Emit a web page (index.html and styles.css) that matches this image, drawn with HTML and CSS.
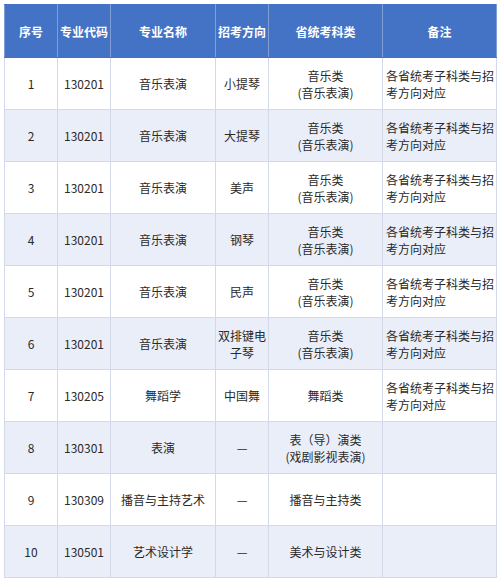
FILE: index.html
```html
<!DOCTYPE html>
<html lang="zh">
<head>
<meta charset="utf-8">
<link rel="stylesheet" href="styles.css">
</head>
<body>
<table class="majors">
  <colgroup>
    <col class="c-no"><col class="c-code"><col class="c-name"><col class="c-dir"><col class="c-cat"><col class="c-note">
  </colgroup>
  <thead>
    <tr><th>序号</th><th>专业代码</th><th>专业名称</th><th>招考方向</th><th>省统考科类</th><th>备注</th></tr>
  </thead>
  <tbody>
    <tr><td>1</td><td>130201</td><td>音乐表演</td><td>小提琴</td><td>音乐类<br>(音乐表演)</td><td class="note">各省统考子科类与招<br>考方向对应</td></tr>
    <tr><td>2</td><td>130201</td><td>音乐表演</td><td>大提琴</td><td>音乐类<br>(音乐表演)</td><td class="note">各省统考子科类与招<br>考方向对应</td></tr>
    <tr><td>3</td><td>130201</td><td>音乐表演</td><td>美声</td><td>音乐类<br>(音乐表演)</td><td class="note">各省统考子科类与招<br>考方向对应</td></tr>
    <tr><td>4</td><td>130201</td><td>音乐表演</td><td>钢琴</td><td>音乐类<br>(音乐表演)</td><td class="note">各省统考子科类与招<br>考方向对应</td></tr>
    <tr><td>5</td><td>130201</td><td>音乐表演</td><td>民声</td><td>音乐类<br>(音乐表演)</td><td class="note">各省统考子科类与招<br>考方向对应</td></tr>
    <tr><td>6</td><td>130201</td><td>音乐表演</td><td class="tight">双排键电<br>子琴</td><td>音乐类<br>(音乐表演)</td><td class="note">各省统考子科类与招<br>考方向对应</td></tr>
    <tr><td>7</td><td>130205</td><td>舞蹈学</td><td>中国舞</td><td>舞蹈类</td><td class="note">各省统考子科类与招<br>考方向对应</td></tr>
    <tr><td>8</td><td>130301</td><td>表演</td><td>—</td><td>表（导）演类<br>(戏剧影视表演)</td><td class="note"></td></tr>
    <tr><td>9</td><td>130309</td><td>播音与主持艺术</td><td>—</td><td>播音与主持类</td><td class="note"></td></tr>
    <tr><td>10</td><td>130501</td><td>艺术设计学</td><td>—</td><td>美术与设计类</td><td class="note"></td></tr>
  </tbody>
</table>
</body>
</html>
```
FILE: styles.css
```css
html, body {
  margin: 0;
  background: #ffffff;
}
body {
  padding: 4px;
  font-family: "Noto Sans CJK SC", "Noto Sans", sans-serif;
}
.majors {
  border-collapse: collapse;
  table-layout: fixed;
  width: 492px;
  border: 1px solid #c3cad9;
  font-size: 12px;
  color: #2a2a2a;
}
.c-no { width: 53px; }
.c-code { width: 53px; }
.c-name { width: 105px; }
.c-dir { width: 53px; }
.c-cat { width: 114px; }
.c-note { width: 114px; }
.majors th {
  background: #4472c4;
  color: #ffffff;
  font-weight: bold;
  font-size: 12px;
  height: 52px;
  padding: 0;
  border-left: 1px solid #7f9dd6;
  border-right: 1px solid #7f9dd6;
  border-top: 1px solid #4472c4;
  border-bottom: 1px solid #4472c4;
  text-align: center;
  vertical-align: middle;
}
.majors td {
  height: 51px;
  padding: 0 2px;
  border: 1px solid #d3d9e8;
  text-align: center;
  vertical-align: middle;
  line-height: 17px;
}
.majors tbody tr:nth-child(even) td {
  background: #eaeef8;
}
.majors td.tight {
  padding: 0;
  white-space: nowrap;
}
.majors td.note {
  text-align: left;
  padding-left: 3px;
  white-space: nowrap;
}
```
